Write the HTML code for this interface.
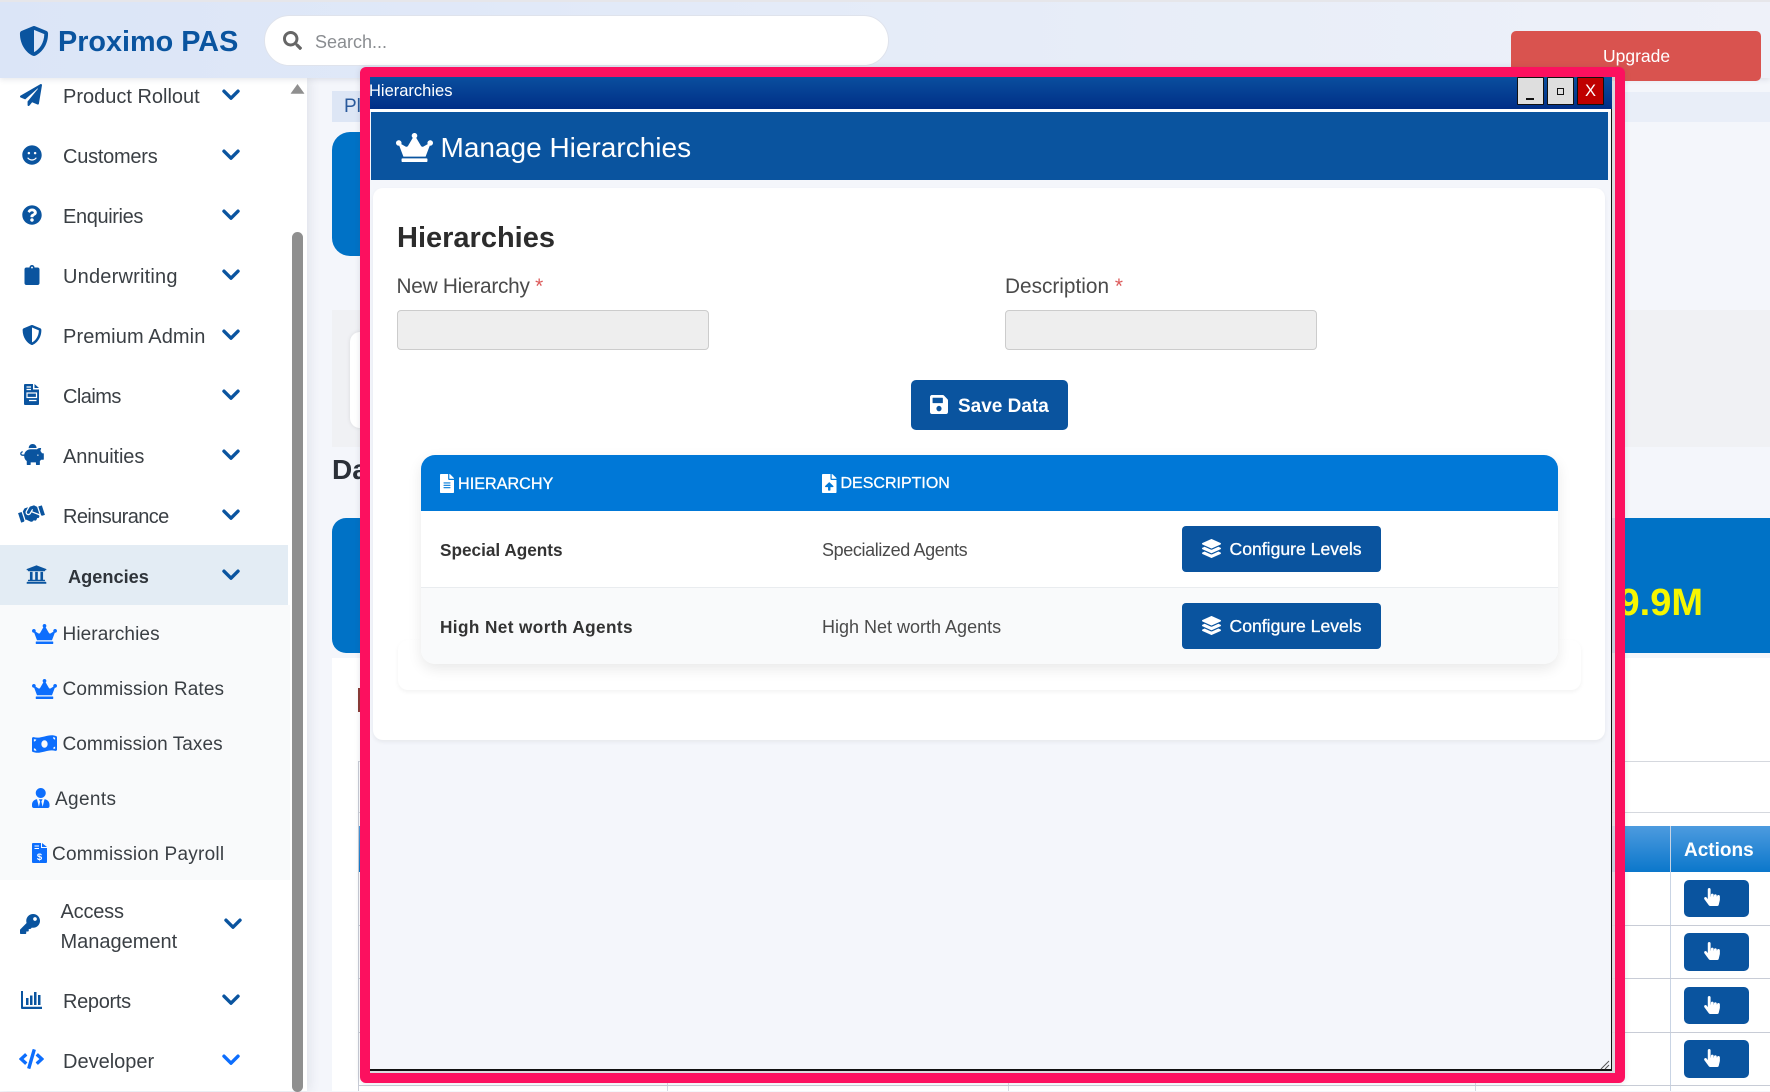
<!DOCTYPE html>
<html lang="en"><head><meta charset="utf-8"><title>Hierarchies</title>
<style>
*{box-sizing:border-box}
html,body{margin:0;padding:0;width:1770px;height:1091px;overflow:hidden;background:#f4f6fb;font-family:"Liberation Sans",Arial,sans-serif;color:#3a3f44}
.a{position:absolute}
.t{position:absolute;white-space:nowrap;line-height:30px;height:30px}
svg{position:absolute;display:block;overflow:visible}
.nav{font-size:20px;color:#3a3f44}
.sub{font-size:19px;color:#3a3f44}
.hb{position:absolute;background:#dedede;border:1px solid #111;border-radius:1px;color:#111;text-align:center}
</style></head><body>
<svg width="0" height="0" style="position:absolute"><defs>
<symbol id="crown" viewBox="0 0 640 512"><path d="M528 448H112c-8.8 0-16 7.2-16 16v32c0 8.8 7.2 16 16 16h416c8.8 0 16-7.2 16-16v-32c0-8.8-7.2-16-16-16zm64-320c-26.5 0-48 21.5-48 48 0 7.1 1.6 13.7 4.4 19.8L476 239.2c-15.4 9.2-35.3 4-44.2-11.6L350.3 85C361 76.2 368 63 368 48c0-26.5-21.5-48-48-48s-48 21.5-48 48c0 15 7 28.2 17.7 37l-81.5 142.6c-8.9 15.6-28.9 20.8-44.2 11.6l-72.3-43.4c2.7-6 4.4-12.7 4.4-19.8 0-26.5-21.5-48-48-48S0 149.5 0 176s21.5 48 48 48c2.6 0 5.2-.4 7.7-.8L128 416h384l72.3-192.8c2.5.4 5.1.8 7.7.8 26.5 0 48-21.5 48-48s-21.5-48-48-48z"/></symbol>
<symbol id="layers" viewBox="0 0 512 512"><path d="M12.41 148.02l232.94 105.67c6.8 3.09 14.49 3.09 21.29 0l232.94-105.67c16.55-7.51 16.55-32.52 0-40.03L266.65 2.31a25.607 25.607 0 0 0-21.29 0L12.41 107.98c-16.55 7.51-16.55 32.53 0 40.04zm487.18 88.28l-58.09-26.33-161.64 73.27c-7.56 3.43-15.59 5.17-23.86 5.17s-16.29-1.74-23.86-5.17L70.51 209.97l-58.1 26.33c-16.55 7.5-16.55 32.5 0 40l232.94 105.59c6.8 3.08 14.49 3.08 21.29 0L499.59 276.3c16.55-7.5 16.55-32.5 0-40zm0 127.8l-57.87-26.23-161.86 73.37c-7.56 3.43-15.59 5.17-23.86 5.17s-16.29-1.74-23.86-5.17L70.29 337.87 12.41 364.1c-16.55 7.5-16.55 32.5 0 40l232.94 105.59c6.8 3.08 14.49 3.08 21.29 0L499.59 404.1c16.55-7.5 16.55-32.5 0-40z"/></symbol>
<symbol id="hand" viewBox="0 0 448 512"><path d="M448 240v96c0 3.084-.356 6.159-1.063 9.162l-32 136C410.686 499.23 394.562 512 376 512H168a40.004 40.004 0 0 1-32.35-16.473l-127.997-176c-12.993-17.866-9.043-42.883 8.822-55.876 17.867-12.994 42.884-9.043 55.877 8.823L104 315.992V40c0-22.091 17.908-40 40-40s40 17.909 40 40v200h8v-40c0-22.091 17.908-40 40-40s40 17.909 40 40v40h8v-24c0-22.091 17.908-40 40-40s40 17.909 40 40v24h8c0-22.091 17.908-40 40-40s40 17.909 40 40z"/></symbol>
<symbol id="shield" viewBox="0 0 512 512"><path d="M466.5 83.7l-192-80a48.15 48.15 0 0 0-36.9 0l-192 80C27.7 91.1 16 108.6 16 128c0 198.5 114.5 335.7 221.5 380.3 11.8 4.9 25.1 4.9 36.9 0C360.1 472.6 496 349.3 496 128c0-19.4-11.7-36.9-29.5-44.3zM256.1 446.3l-.1-381 175.9 73.3c-3.3 151.4-82.1 261.1-175.8 307.7z"/></symbol>
<symbol id="chev" viewBox="0 0 18 12"><path d="M2 2.2 9 9.2 16 2.2" fill="none" stroke="currentColor" stroke-width="3.4" stroke-linecap="round" stroke-linejoin="round"/></symbol>
</defs></svg>

<!-- main background content -->
<div class="a" style="left:0;top:0;width:1770px;height:1091px;background:#f4f6fb"></div>
<div class="a" style="left:332px;top:92px;width:1438px;height:30px;background:#e9eef8"></div>
<div class="a" style="left:332px;top:91px;width:60px;height:31px;background:#dde6f5"></div>
<div class="t" style="left:344px;top:92px;font-size:19px;color:#2a5a9c">Pl</div>
<div class="a" style="left:332px;top:132px;width:100px;height:124px;background:#0072c6;border-radius:18px"></div>
<div class="a" style="left:332px;top:310px;width:1438px;height:137px;background:#f0f1f4"></div>
<div class="a" style="left:350px;top:332px;width:60px;height:96px;background:#fff;border-radius:10px;box-shadow:0 0 4px rgba(0,0,0,.1)"></div>
<div class="t" style="left:332px;top:455px;font-size:28px;font-weight:700;color:#2b3038">Da</div>
<div class="a" style="left:332px;top:518px;width:1438px;height:135px;background:#0072c6;border-radius:14px 0 0 14px"></div>
<div class="t" style="right:67px;top:588px;font-size:38px;font-weight:700;color:#f6f600">9.9M</div>
<div class="t" style="left:1614px;top:541px;font-size:15px;color:#c8d8ec">il</div>
<div class="a" style="left:332px;top:658px;width:1438px;height:433px;background:#fff"></div>
<div class="a" style="left:358px;top:688px;width:3px;height:24px;background:#8c3b35"></div>
<div class="a" style="left:358px;top:761px;width:1412px;height:1px;background:#d5d8de"></div>
<div class="a" style="left:358px;top:812px;width:1412px;height:1px;background:#d5d8de"></div>
<div class="a" style="left:358px;top:826px;width:1412px;height:46px;background:linear-gradient(#4d9bdf,#0b77cb)"></div>
<div class="a" style="left:358px;top:761px;width:1px;height:330px;background:#c8ccd6"></div>
<div class="a" style="left:1670px;top:826px;width:1px;height:265px;background:#c9d4e4"></div>
<div class="a" style="left:667px;top:1073px;width:1px;height:18px;background:#d5d8e2"></div>
<div class="a" style="left:1008px;top:1073px;width:1px;height:18px;background:#d5d8e2"></div>
<div class="a" style="left:1475px;top:1073px;width:1px;height:18px;background:#d5d8e2"></div>
<div class="a" style="left:358px;top:925px;width:1412px;height:1px;background:#c8ccd6"></div>
<div class="a" style="left:358px;top:978px;width:1412px;height:1px;background:#c8ccd6"></div>
<div class="a" style="left:358px;top:1032px;width:1412px;height:1px;background:#c8ccd6"></div>
<div class="a" style="left:358px;top:1085px;width:1412px;height:1px;background:#c8ccd6"></div>
<div class="t" style="left:1684px;top:836px;font-size:19px;font-weight:700;color:#fff">Actions</div>
<div class="a" style="left:1684px;top:880px;width:65px;height:37px;background:#0a549f;border-radius:5px"></div>
<div class="a" style="left:1684px;top:933px;width:65px;height:38px;background:#0a549f;border-radius:5px"></div>
<div class="a" style="left:1684px;top:987px;width:65px;height:37px;background:#0a549f;border-radius:5px"></div>
<div class="a" style="left:1684px;top:1040px;width:65px;height:38px;background:#0a549f;border-radius:5px"></div>
<svg style="left:1704px;top:888px" width="16" height="18" fill="#fff"><use href="#hand"/></svg>
<svg style="left:1704px;top:942px" width="16" height="18" fill="#fff"><use href="#hand"/></svg>
<svg style="left:1704px;top:996px" width="16" height="18" fill="#fff"><use href="#hand"/></svg>
<svg style="left:1704px;top:1049px" width="16" height="18" fill="#fff"><use href="#hand"/></svg>

<!-- sidebar -->
<div class="a" style="left:0;top:78px;width:307px;height:1013px;background:#fff;box-shadow:3px 0 10px rgba(60,70,90,.10)"></div>
<div class="a" style="left:0;top:545px;width:288px;height:60px;background:#e3ecf4"></div>
<div class="a" style="left:0;top:605px;width:290px;height:275px;background:#f9fafb"></div>
<div class="a" style="left:292px;top:232px;width:11px;height:860px;background:#8f8f8f;border-radius:6px"></div>
<svg style="left:291px;top:84px" width="13" height="10"><path d="M6.500 .5 13 9.500H0z" fill="#8f8f8f" stroke="#8f8f8f" stroke-width=".6" stroke-linejoin="round"/></svg>

<svg style="left:20px;top:84px" width="22" height="22" viewBox="0 0 512 512" fill="#0a549f"><path d="M476 3.2L12.5 270.6c-18.1 10.4-15.8 35.6 2.2 43.2L121 358.4l287.3-253.2c5.5-4.9 13.3 2.6 8.6 8.3L176 407v80.5c0 23.6 28.5 32.9 42.5 15.8L282 426l124.6 52.2c14.2 6 30.4-2.9 33-18.2l72-432C515 7.8 493.3-6.8 476 3.2z"/></svg>
<div class="t nav" style="left:63px;top:82px">Product Rollout</div>
<svg style="left:222px;top:89px;color:#0a549f" width="18" height="12"><use href="#chev"/></svg>

<svg style="left:22px;top:145px" width="20" height="20" viewBox="0 0 496 512" fill="#0a549f"><path d="M248 8C111 8 0 119 0 256s111 248 248 248 248-111 248-248S385 8 248 8zm80 168c17.7 0 32 14.3 32 32s-14.3 32-32 32-32-14.3-32-32 14.3-32 32-32zm-160 0c17.7 0 32 14.3 32 32s-14.3 32-32 32-32-14.3-32-32 14.3-32 32-32zm194.8 170.2C334.3 380.4 292.5 400 248 400s-86.3-19.6-114.8-53.8c-13.6-16.3 11-36.7 24.6-20.5 22.4 26.9 55.2 42.2 90.2 42.2s67.8-15.4 90.2-42.2c13.4-16.2 38.1 4.2 24.6 20.5z"/></svg>
<div class="t nav" style="left:63px;top:142px;letter-spacing:-.25px">Customers</div>
<svg style="left:222px;top:149px;color:#0a549f" width="18" height="12"><use href="#chev"/></svg>

<svg style="left:22px;top:205px" width="20" height="20" viewBox="0 0 512 512" fill="#0a549f"><path d="M504 256c0 136.997-111.043 248-248 248S8 392.997 8 256C8 119.083 119.043 8 256 8s248 111.083 248 248zM262.655 90c-54.497 0-89.255 22.957-116.549 63.758-3.536 5.286-2.353 12.415 2.715 16.258l34.699 26.31c5.205 3.947 12.621 3.008 16.665-2.122 17.864-22.658 30.113-35.797 57.303-35.797 20.429 0 45.698 13.148 45.698 32.958 0 14.976-12.363 22.667-32.534 33.976C247.128 238.528 216 254.941 216 296v4c0 6.627 5.373 12 12 12h56c6.627 0 12-5.373 12-12v-1.333c0-28.462 83.186-29.647 83.186-106.667 0-58.002-60.165-102-116.531-102zM256 338c-25.365 0-46 20.635-46 46 0 25.364 20.635 46 46 46s46-20.636 46-46c0-25.365-20.635-46-46-46z"/></svg>
<div class="t nav" style="left:63px;top:202px;letter-spacing:-.38px">Enquiries</div>
<svg style="left:222px;top:209px;color:#0a549f" width="18" height="12"><use href="#chev"/></svg>

<svg style="left:24px;top:265px" width="16" height="20" viewBox="0 0 384 512" fill="#0a549f"><path d="M336 64h-80c0-35.3-28.7-64-64-64s-64 28.7-64 64H48C21.5 64 0 85.5 0 112v352c0 26.5 21.5 48 48 48h288c26.5 0 48-21.5 48-48V112c0-26.5-21.5-48-48-48zM192 40c13.3 0 24 10.7 24 24s-10.7 24-24 24-24-10.7-24-24 10.7-24 24-24z"/></svg>
<div class="t nav" style="left:63px;top:262px;letter-spacing:.2px">Underwriting</div>
<svg style="left:222px;top:269px;color:#0a549f" width="18" height="12"><use href="#chev"/></svg>

<svg style="left:22px;top:325px" width="20" height="20" fill="#0a549f"><use href="#shield"/></svg>
<div class="t nav" style="left:63px;top:322px;letter-spacing:.1px">Premium Admin</div>
<svg style="left:222px;top:329px;color:#0a549f" width="18" height="12"><use href="#chev"/></svg>

<svg style="left:24px;top:384px" width="15" height="21" viewBox="0 0 15 21"><path d="M1 0H9V5.5H15V20a1 1 0 0 1-1 1H1a1 1 0 0 1-1-1V1a1 1 0 0 1 1-1zM10.500 0 15 4H10.500z" fill="#0a549f"/><path d="M2.500 3H7M2.500 5.500H7M5 16.500H12.500" stroke="#fff" stroke-width="1.200"/><rect x="3" y="9" width="9.500" height="4.500" fill="none" stroke="#fff" stroke-width="1.200"/></svg>
<div class="t nav" style="left:63px;top:382px;letter-spacing:-.55px">Claims</div>
<svg style="left:222px;top:389px;color:#0a549f" width="18" height="12"><use href="#chev"/></svg>

<svg style="left:20px;top:444px" width="24" height="21" viewBox="0 0 576 512" fill="#0a549f"><path d="M560 224h-29.5c-8.8-20-21.6-37.7-37.4-52.5L512 96h-32c-29.4 0-55.4 13.5-73 34.3-7.6-1.1-15.1-2.300-23-2.300H256c-77.400 0-141.900 55-156.800 128H56c-14.800 0-26.500-13.500-23.500-28.800C34.700 215.800 45.400 208 57 208h1c3.300 0 6-2.700 6-6v-20c0-3.300-2.700-6-6-6-28.500 0-53.900 20.400-57.500 48.600C-3.900 258.800 22.700 288 56 288h40c0 52.200 25.400 98.100 64 127.300V496c0 8.800 7.200 16 16 16h64c8.800 0 16-7.200 16-16v-48h128v48c0 8.800 7.200 16 16 16h64c8.800 0 16-7.200 16-16v-80.700c11.800-8.900 22.300-19.400 31.300-31.300H560c8.800 0 16-7.200 16-16V240c0-8.800-7.200-16-16-16zm-128 64c-8.800 0-16-7.200-16-16s7.200-16 16-16 16 7.200 16 16-7.200 16-16 16zM256 96h128c5.400 0 10.700.4 15.900.8 0-.3.1-.5.1-.8 0-53-43-96-96-96s-96 43-96 96c0 2.100.5 4.100.6 6.200 15.200-3.900 31-6.200 47.400-6.200z"/></svg>
<div class="t nav" style="left:63px;top:442px;letter-spacing:-.12px">Annuities</div>
<svg style="left:222px;top:449px;color:#0a549f" width="18" height="12"><use href="#chev"/></svg>

<svg style="left:19px;top:504px" width="25" height="20" viewBox="0 0 640 512" fill="#0a549f"><g transform="rotate(-18 320 256)"><path d="M434.700 64h-85.900c-8 0-15.700 3-21.600 8.400l-98.300 90c-.1.1-.2.3-.3.4-16.600 15.600-16.300 40.500-2.100 56 12.700 13.900 39.400 17.600 56.100 2.700.1-.1.3-.1.4-.2l79.900-73.200c6.500-5.900 16.700-5.500 22.600 1 6 6.500 5.500 16.600-1 22.600l-26.100 23.900L504 313.800c2.900 2.400 5.500 5 7.900 7.700V128l-54.600-54.600c-5.900-6-14.100-9.400-22.600-9.400zM544 128.200v223.900c0 17.700 14.300 32 32 32h64V128.200h-96zM0 384h64c17.700 0 32-14.300 32-32V128.200H0V384zm483.900-45.300L334.600 217.500l-30 27.500c-29.700 27.100-75.200 24.500-101.700-4.400-26.900-29.400-24.800-74.900 4.400-101.700L289.100 64h-83.800c-8.500 0-16.600 3.400-22.600 9.400L128 128v223.900h18.300l90.500 81.900c27.400 22.300 67.700 18.100 90-9.300l.2-.2 17.900 15.500c15.900 13 39.400 10.500 52.300-5.400l31.400-38.600 5.400 4.400c13.700 11.100 33.900 9.100 45-4.700l9.500-11.700c11.200-13.800 9.100-33.900-4.600-45.100z"/></g></svg>
<div class="t nav" style="left:63px;top:502px;letter-spacing:-.6px">Reinsurance</div>
<svg style="left:222px;top:509px;color:#0a549f" width="18" height="12"><use href="#chev"/></svg>

<svg style="left:26px;top:564px" width="21" height="21" viewBox="0 0 512 512" fill="#0a549f"><path d="M496 128v16a8 8 0 0 1-8 8h-24v12c0 6.627-5.373 12-12 12H60c-6.627 0-12-5.373-12-12v-12H24a8 8 0 0 1-8-8v-16a8 8 0 0 1 4.941-7.392l232-88a7.996 7.996 0 0 1 6.118 0l232 88A8 8 0 0 1 496 128zm-24 304H40c-13.255 0-24 10.745-24 24v16a8 8 0 0 0 8 8h464a8 8 0 0 0 8-8v-16c0-13.255-10.745-24-24-24zM96 192v192H60c-6.627 0-12 5.373-12 12v20h416v-20c0-6.627-5.373-12-12-12h-36V192h-64v192h-64V192h-64v192h-64V192H96z"/></svg>
<div class="t" style="left:68px;top:561.500px;font-size:18.200px;font-weight:700;color:#2f343a">Agencies</div>
<svg style="left:222px;top:569px;color:#0a549f" width="18" height="12"><use href="#chev"/></svg>

<svg style="left:32px;top:624px" width="25" height="20" fill="#0d6efd"><use href="#crown"/></svg>
<div class="t sub" style="left:62.500px;top:620px;letter-spacing:.1px">Hierarchies</div>
<svg style="left:32px;top:679px" width="25" height="20" fill="#0d6efd"><use href="#crown"/></svg>
<div class="t sub" style="left:62.500px;top:675px;letter-spacing:.14px">Commission Rates</div>
<svg style="left:32px;top:734px" width="25" height="20" viewBox="0 0 640 512" fill="#0d6efd"><path d="M621.160 54.460C582.370 38.190 543.550 32 504.750 32c-123.170-.01-246.330 62.340-369.500 62.340-30.890 0-61.760-3.920-92.650-13.720-3.470-1.100-6.950-1.620-10.350-1.620C15.040 79 0 92.320 0 110.810v317.260c0 12.630 7.230 24.600 18.840 29.460C57.630 473.810 96.450 480 135.250 480c123.170 0 246.340-62.350 369.510-62.350 30.890 0 61.760 3.920 92.650 13.720 3.470 1.100 6.950 1.620 10.350 1.620 17.210 0 32.250-13.320 32.250-31.810V83.930c-.01-12.640-7.240-24.600-18.850-29.470zM48 132.220c20.120 5.040 41.120 7.570 62.720 8.930C104.840 170.540 79 192.690 48 192.690v-60.470zm0 285v-47.780c34.370 0 62.180 27.270 63.710 61.400-22.530-1.810-43.590-6.310-63.710-13.620zM320 352c-44.190 0-80-42.990-80-96 0-53.020 35.820-96 80-96s80 42.980 80 96c0 53.030-35.830 96-80 96zm272 27.780c-17.520-4.390-35.710-6.850-54.320-8.440 5.870-26.080 27.500-45.880 54.320-49.280v57.720zm0-236.110c-30.890-3.910-54.860-29.700-55.810-61.550 19.540 2.170 38.090 6.230 55.810 12.660v48.890z"/></svg>
<div class="t sub" style="left:62.500px;top:730px;letter-spacing:.07px">Commission Taxes</div>
<svg style="left:32px;top:788px" width="17.500" height="20" viewBox="0 0 448 512" fill="#0d6efd"><path d="M224 256c70.700 0 128-57.300 128-128S294.700 0 224 0 96 57.300 96 128s57.300 128 128 128zm95.800 32.600L272 480l-32-136 32-56h-96l32 56-32 136-47.800-191.400C56.900 292 0 350.300 0 422.400V464c0 26.500 21.500 48 48 48h352c26.500 0 48-21.500 48-48v-41.600c0-72.100-56.900-130.400-128.200-133.800z"/></svg>
<div class="t sub" style="left:55px;top:785px;letter-spacing:.37px">Agents</div>
<svg style="left:32px;top:843px" width="15" height="20" viewBox="0 0 15 20"><path d="M1 0H9V5H15V19a1 1 0 0 1-1 1H1a1 1 0 0 1-1-1V1a1 1 0 0 1 1-1zM10 0 15 4H10z" fill="#0d6efd"/><path d="M2.500 3H7M2.500 5.500H7" stroke="#fff" stroke-width="1.100"/><text x="7.500" y="17" text-anchor="middle" font-size="9.500" font-weight="700" fill="#fff" font-family="Liberation Sans">$</text></svg>
<div class="t sub" style="left:52px;top:840px;letter-spacing:.25px">Commission Payroll</div>

<svg style="left:20px;top:914px" width="20" height="20" viewBox="0 0 512 512" fill="#0a549f"><path d="M512 176.001C512 273.203 433.202 352 336 352c-11.220 0-22.190-1.062-32.827-3.069l-24.012 27.014A23.999 23.999 0 0 1 261.223 384H224v40c0 13.255-10.745 24-24 24h-40v40c0 13.255-10.745 24-24 24H24c-13.255 0-24-10.745-24-24v-78.059c0-6.365 2.529-12.470 7.029-16.971l161.802-161.802C163.108 213.814 160 195.271 160 176 160 78.798 238.797.001 335.999 0 433.488-.001 512 78.511 512 176.001zM336 128c0 26.510 21.490 48 48 48s48-21.490 48-48-21.490-48-48-48-48 21.490-48 48z"/></svg>
<div class="t nav" style="left:60.500px;top:897px;letter-spacing:-.2px">Access</div>
<div class="t nav" style="left:60.500px;top:927px">Management</div>
<svg style="left:224px;top:918px;color:#0a549f" width="18" height="12"><use href="#chev"/></svg>

<svg style="left:21px;top:991px" width="21" height="18" viewBox="0 0 21 18" fill="#0a549f"><path d="M0 0H2V15.800H21V18H1a1 1 0 0 1-1-1z"/><rect x="5" y="7" width="2.500" height="7"/><rect x="9" y="4.500" width="2.500" height="9.500"/><rect x="13" y="1" width="2.500" height="13"/><rect x="17" y="4" width="2.500" height="10"/></svg>
<div class="t nav" style="left:63px;top:987px;letter-spacing:-.32px">Reports</div>
<svg style="left:222px;top:994px;color:#0a549f" width="18" height="12"><use href="#chev"/></svg>

<svg style="left:19px;top:1049px" width="25" height="20" viewBox="0 0 640 512" fill="#0d6efd"><path d="M278.900 511.500l-61-17.700c-6.400-1.800-10-8.500-8.200-14.900L346.200 8.700c1.800-6.400 8.500-10 14.900-8.200l61 17.700c6.400 1.800 10 8.500 8.200 14.900L293.800 503.300c-1.900 6.400-8.500 10.100-14.900 8.200zm-114-112.200l43.500-46.400c4.600-4.900 4.300-12.700-.8-17.200L117 256l90.600-79.700c5.100-4.500 5.500-12.300.8-17.200l-43.500-46.400c-4.500-4.800-12.100-5.100-17-.5L3.800 247.200c-5.100 4.700-5.100 12.800 0 17.500l144.100 135.100c4.900 4.600 12.500 4.400 17-.5zm327.200.6l144.100-135.100c5.100-4.700 5.100-12.800 0-17.500L492.100 112.100c-4.800-4.500-12.400-4.300-17 .5L431.600 159c-4.600 4.900-4.300 12.700.8 17.200L523 256l-90.600 79.700c-5.100 4.500-5.500 12.300-.8 17.200l43.500 46.400c4.500 4.900 12.100 5.100 17 .6z"/></svg>
<div class="t nav" style="left:63px;top:1047px">Developer</div>
<svg style="left:222px;top:1054px;color:#0d6efd" width="18" height="12"><use href="#chev"/></svg>

<!-- top bar -->
<div class="a" style="left:0;top:0;width:1770px;height:78px;background:linear-gradient(90deg,#dbe5f7 0%,#e4ebf8 45%,#eef1f9 100%);border-top:2px solid #e6e6ea;box-shadow:0 2px 5px rgba(70,80,110,.12)"></div>
<svg style="left:19px;top:26px" width="30" height="30" fill="#0a549f"><use href="#shield"/></svg>
<div class="t" style="left:58px;top:27px;font-size:28.800px;font-weight:700;color:#0a549f">Proximo PAS</div>
<div class="a" style="left:264px;top:15px;width:625px;height:51px;background:#fff;border:1px solid #dfe3ec;border-radius:26px"></div>
<svg style="left:283px;top:31px" width="19" height="19" viewBox="0 0 512 512" fill="#666"><path d="M505 442.700L405.300 343c-4.500-4.500-10.600-7-17-7H372c27.600-35.300 44-79.700 44-128C416 93.100 322.900 0 208 0S0 93.100 0 208s93.100 208 208 208c48.300 0 92.700-16.400 128-44v16.300c0 6.400 2.500 12.500 7 17l99.700 99.700c9.400 9.400 24.600 9.400 33.900 0l28.300-28.300c9.400-9.400 9.400-24.600.1-34zM208 336c-70.700 0-128-57.200-128-128 0-70.700 57.200-128 128-128 70.700 0 128 57.200 128 128 0 70.700-57.200 128-128 128z"/></svg>
<div class="t" style="left:315px;top:27px;font-size:18px;color:#8a8d91">Search...</div>
<div class="a" style="left:1511px;top:31px;width:250px;height:50px;background:#d9534f;border-radius:5px"></div>
<div class="t" style="left:1603px;top:41px;font-size:17.500px;color:#fff">Upgrade</div>

<!-- window frame -->
<div class="a" style="left:360px;top:67px;width:1265px;height:1016px;border:10px solid #fc105f;border-radius:6px;background:rgba(215,215,220,.9);box-shadow:0 0 6px rgba(60,60,80,.15)"></div>
<div class="a" style="left:370px;top:77px;width:1242px;height:994px;background:#f4f6fb;border-right:1.500px solid #111;border-bottom:2px solid #111"></div>
<div class="a" style="left:370px;top:77px;width:1242px;height:32px;background:linear-gradient(#0a4f9e,#002e87)"></div>
<div class="a" style="left:370px;top:109px;width:1241px;height:3px;background:#fff"></div>
<div class="t" style="left:369px;top:76px;font-size:16.500px;color:#fff">Hierarchies</div>
<div class="hb" style="left:1517px;top:77px;width:26.500px;height:27.500px"></div>
<div class="a" style="left:1526px;top:98px;width:8px;height:1.500px;background:#111"></div>
<div class="hb" style="left:1547px;top:77px;width:26.500px;height:27.500px"></div>
<div class="a" style="left:1557px;top:88px;width:7px;height:7px;border:1px solid #111"></div>
<div class="hb" style="left:1577px;top:77px;width:27px;height:27.500px;background:#bf0000;color:#fff;font-size:16.500px;line-height:26px">X</div>

<div class="a" style="left:371px;top:112px;width:1237px;height:68px;background:#0a549f"></div>
<svg style="left:396px;top:133px" width="37" height="29" viewBox="0 0 640 512" preserveAspectRatio="none" fill="#fff"><use href="#crown"/></svg>
<div class="t" style="left:440.500px;top:133px;font-size:28px;color:#fff">Manage Hierarchies</div>

<div class="a" style="left:373px;top:188px;width:1232px;height:552px;background:#fff;border-radius:10px;box-shadow:0 2px 4px rgba(0,0,0,.06)"></div>
<div class="a" style="left:398px;top:640px;width:1183px;height:50px;background:#fff;border-radius:10px;box-shadow:0 2px 4px rgba(0,0,0,.05)"></div>
<div class="t" style="left:397px;top:222.500px;font-size:29px;font-weight:700;color:#2c2c2c">Hierarchies</div>
<div class="t" style="left:396.500px;top:272px;font-size:20.800px;letter-spacing:-.25px;color:#4a4a4a">New Hierarchy <span style="color:#dc5a5a">*</span></div>
<div class="t" style="left:1005px;top:272px;font-size:20.800px;color:#4a4a4a">Description <span style="color:#dc5a5a">*</span></div>
<div class="a" style="left:396.500px;top:310px;width:312px;height:40px;background:#eee;border:1px solid #ccc;border-radius:4px"></div>
<div class="a" style="left:1005px;top:310px;width:312px;height:40px;background:#eee;border:1px solid #ccc;border-radius:4px"></div>

<div class="a" style="left:911px;top:380px;width:157px;height:50px;background:#0a549f;border-radius:5px"></div>
<svg style="left:930px;top:395px" width="18" height="19" viewBox="0 32 448 448" preserveAspectRatio="none" fill="#fff"><path d="M433.941 129.941l-83.882-83.882A48 48 0 0 0 316.118 32H48C21.490 32 0 53.490 0 80v352c0 26.510 21.490 48 48 48h352c26.510 0 48-21.490 48-48V163.882a48 48 0 0 0-14.059-33.941zM224 416c-35.346 0-64-28.654-64-64 0-35.346 28.654-64 64-64s64 28.654 64 64c0 35.346-28.654 64-64 64zm96-304.520V212c0 6.627-5.373 12-12 12H76c-6.627 0-12-5.373-12-12V108c0-6.627 5.373-12 12-12h228.520c3.183 0 6.235 1.264 8.485 3.515l3.480 3.480A11.996 11.996 0 0 1 320 111.480z"/></svg>
<div class="t" style="left:958px;top:392px;font-size:19px;font-weight:700;color:#fff">Save Data</div>

<!-- inner table -->
<div class="a" style="left:421px;top:455px;width:1137px;height:209px;background:#fff;border-radius:14px;box-shadow:0 5px 14px rgba(0,0,0,.09)"></div>
<div class="a" style="left:421px;top:455px;width:1137px;height:56px;background:#0078d7;border-radius:14px 14px 0 0"></div>
<div class="a" style="left:421px;top:587px;width:1137px;height:77px;background:#f9fafb;border-top:1px solid #e9ecef;border-radius:0 0 14px 14px"></div>
<svg style="left:440px;top:474px" width="14" height="19" viewBox="0 0 384 512" preserveAspectRatio="none" fill="#fff"><path d="M224 136V0H24C10.700 0 0 10.700 0 24v464c0 13.300 10.700 24 24 24h336c13.300 0 24-10.700 24-24V160H248c-13.200 0-24-10.800-24-24zm64 236c0 6.600-5.400 12-12 12H108c-6.600 0-12-5.400-12-12v-8c0-6.600 5.400-12 12-12h168c6.600 0 12 5.400 12 12v8zm0-64c0 6.600-5.400 12-12 12H108c-6.600 0-12-5.400-12-12v-8c0-6.600 5.400-12 12-12h168c6.600 0 12 5.400 12 12v8zm0-72v8c0 6.600-5.400 12-12 12H108c-6.600 0-12-5.400-12-12v-8c0-6.600 5.400-12 12-12h168c6.600 0 12 5.400 12 12zm96-114.100v6.100H256V0h6.100c6.400 0 12.500 2.500 17 7l97.900 98c4.500 4.500 7 10.600 7 16.900z"/></svg>
<div class="t" style="left:458px;top:468.500px;font-size:16.200px;color:#fff;-webkit-text-stroke:.3px #fff">HIERARCHY</div>
<svg style="left:822px;top:474px" width="14.500" height="19" viewBox="0 0 384 512" preserveAspectRatio="none" fill="#fff"><path d="M224 136V0H24C10.700 0 0 10.700 0 24v464c0 13.300 10.700 24 24 24h336c13.300 0 24-10.700 24-24V160H248c-13.200 0-24-10.800-24-24zm65.180 216.010H224v80c0 8.840-7.160 16-16 16h-32c-8.840 0-16-7.160-16-16v-80H94.820c-14.280 0-21.410-17.290-11.270-27.360l96.420-95.700c6.650-6.610 17.390-6.610 24.040 0l96.420 95.700c10.150 10.070 3.030 27.360-11.250 27.360zM377 105L279.100 7c-4.500-4.500-10.600-7-17-7H256v128h128v-6.100c0-6.300-2.500-12.400-7-16.900z"/></svg>
<div class="t" style="left:840.500px;top:468.500px;font-size:16px;color:#fff;-webkit-text-stroke:.3px #fff">DESCRIPTION</div>

<div class="t" style="left:440px;top:534.500px;font-size:17.200px;font-weight:700;color:#333">Special Agents</div>
<div class="t" style="left:822px;top:534.500px;font-size:18px;letter-spacing:-.38px;color:#4a4a4a">Specialized Agents</div>
<div class="t" style="left:440px;top:611.500px;font-size:17.200px;letter-spacing:.4px;font-weight:700;color:#333">High Net worth Agents</div>
<div class="t" style="left:822px;top:611.500px;font-size:18px;color:#4a4a4a">High Net worth Agents</div>

<div class="a" style="left:1182px;top:526px;width:199px;height:46px;background:#0a549f;border-radius:4px"></div>
<svg style="left:1202px;top:539px" width="19" height="19" fill="#fff"><use href="#layers"/></svg>
<div class="t" style="left:1229.500px;top:534px;font-size:17.600px;color:#fff;-webkit-text-stroke:.3px #fff">Configure Levels</div>
<div class="a" style="left:1182px;top:603px;width:199px;height:46px;background:#0a549f;border-radius:4px"></div>
<svg style="left:1202px;top:616px" width="19" height="19" fill="#fff"><use href="#layers"/></svg>
<div class="t" style="left:1229.500px;top:611px;font-size:17.600px;color:#fff;-webkit-text-stroke:.3px #fff">Configure Levels</div>

<svg style="left:1600px;top:1060px" width="10" height="9"><path d="M1 9 9 1M5 9 9 5" stroke="#555" stroke-width="1" fill="none"/></svg>
</body></html>
